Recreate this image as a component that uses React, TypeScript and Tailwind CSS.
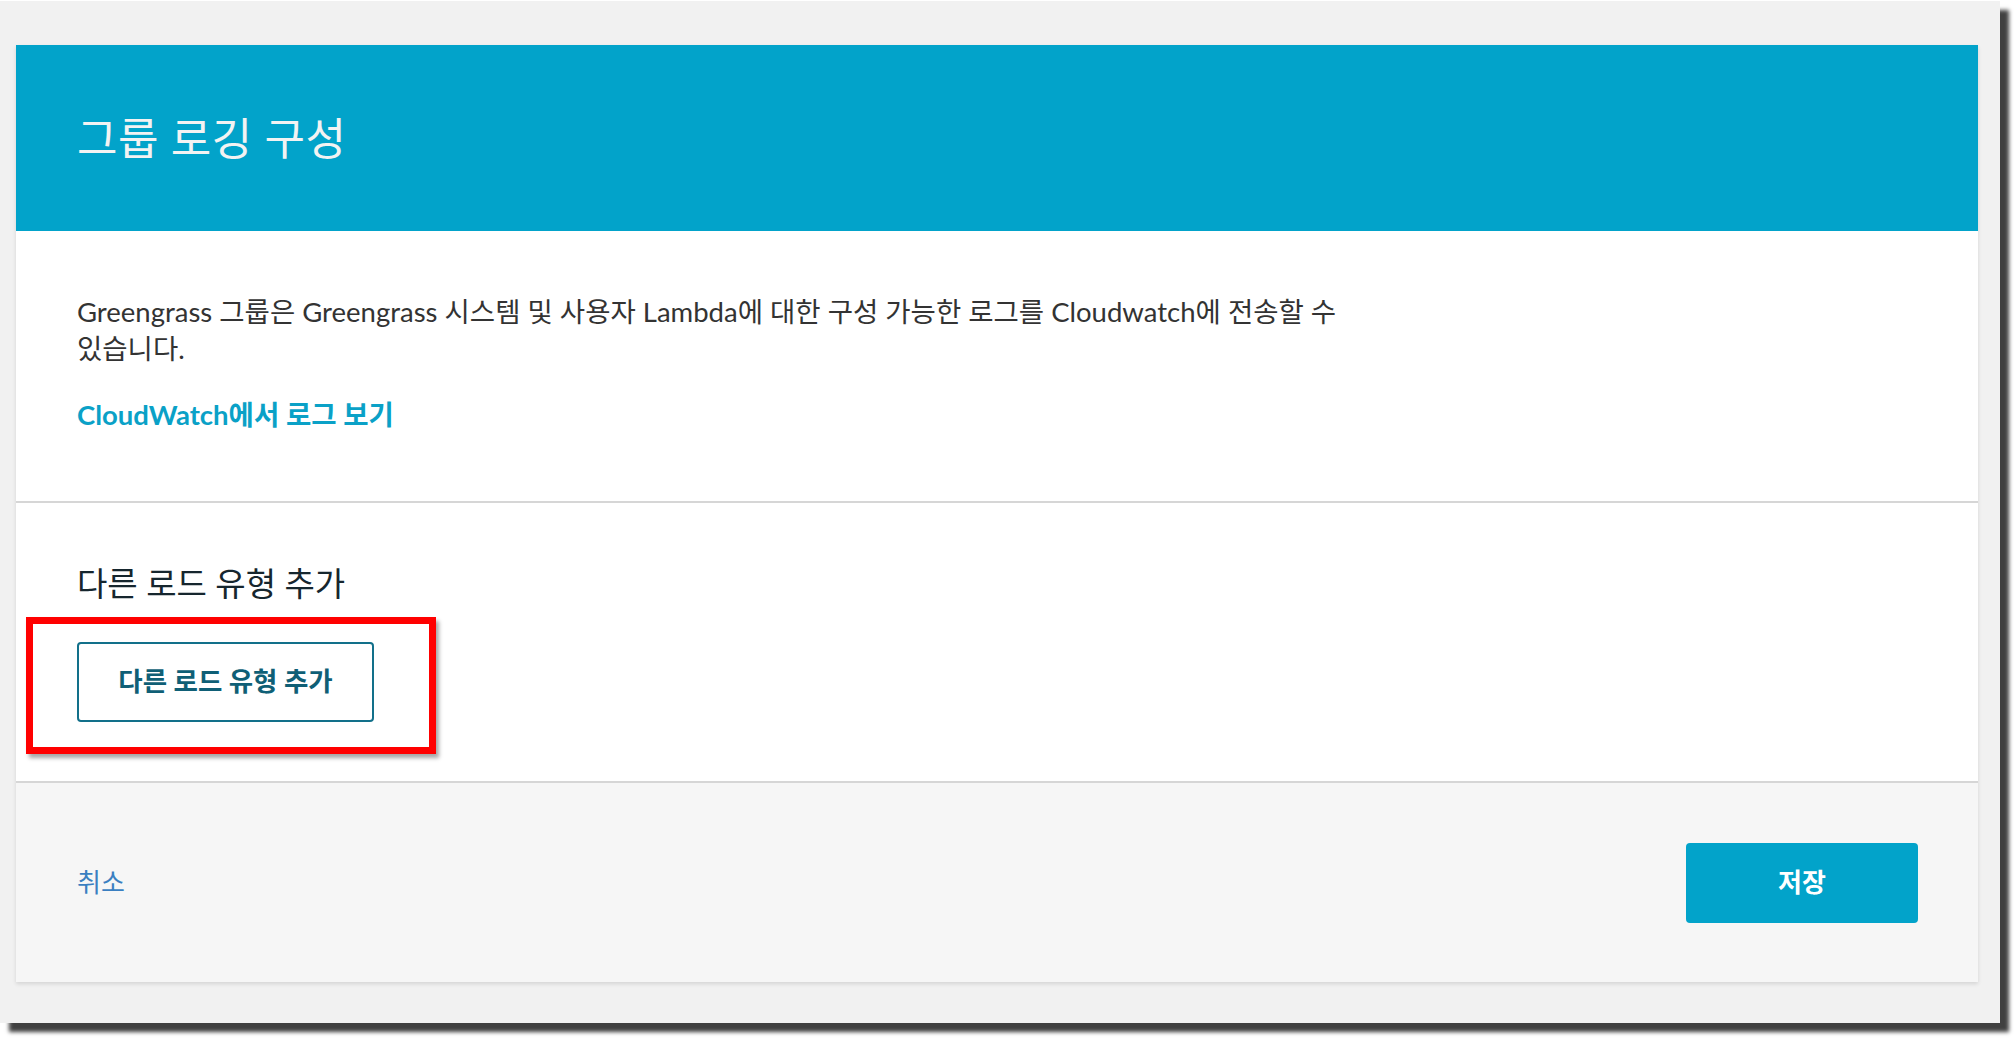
import React from "react";

const FONT = { fontFamily: '"Lato", "Noto Sans CJK KR", sans-serif' };

export default function App() {
  return (
    <div className="relative w-[2014px] h-[1039px] bg-white overflow-hidden" style={FONT}>
      <div className="mt-[1px] w-[2000px] h-[1022px] bg-[#f1f1f1] pt-[44px] pl-[16px] shadow-[9px_9px_4px_rgba(0,0,0,0.75)]">
        <div className="w-[1962px] bg-white shadow-[0_2px_4px_rgba(0,0,0,0.12)]">
          {/* Header */}
          <div className="h-[186px] bg-[#02a3ca] flex items-center px-[61px]">
            <h1 className="text-[44px] leading-none font-normal text-[#f3f3f3] tracking-[0.5px]">그룹 로깅 구성</h1>
          </div>
          {/* Section 1 */}
          <div className="px-[61px] pt-[62px] pb-[68px] border-b-2 border-[#d6d6d6]">
            <p className="max-w-[1300px] break-keep text-[27.5px] leading-[37px] text-[#333333]">
              Greengrass 그룹은 Greengrass 시스템 및 사용자 Lambda에 대한 구성 가능한 로그를 Cloudwatch에 전송할 수 있습니다.
            </p>
            <a className="block mt-[29px] text-[27.5px] leading-[37px] font-bold text-[#0aa1c7]">CloudWatch에서 로그 보기</a>
          </div>
          {/* Section 2 */}
          <div className="px-[61px] pt-[60px] pb-[59px] border-b-2 border-[#d6d6d6]">
            <h2 className="text-[33px] leading-[40px] font-normal text-[#16262e]">다른 로드 유형 추가</h2>
            <button className="mt-[39px] w-[297px] h-[80px] rounded-[4px] border-2 border-[#12708a] bg-white flex items-center justify-center text-[26.5px] font-bold text-[#0f5f76]">
              다른 로드 유형 추가
            </button>
          </div>
          {/* Footer */}
          <div className="h-[199px] bg-[#f6f6f6] px-[60px] flex items-center justify-between">
            <a className="text-[26px] text-[#3a7fc1] pl-[1px]">취소</a>
            <button className="w-[232px] h-[80px] rounded-[4px] bg-[#02a3ca] text-white text-[26px] font-bold flex items-center justify-center">
              저장
            </button>
          </div>
        </div>
      </div>
      {/* Annotation box */}
      <div className="absolute left-[26px] top-[617px] w-[410px] h-[137px] border-[7px] border-[#ff0000] shadow-[3px_4px_4px_rgba(0,0,0,0.35)]" />
    </div>
  );
}
